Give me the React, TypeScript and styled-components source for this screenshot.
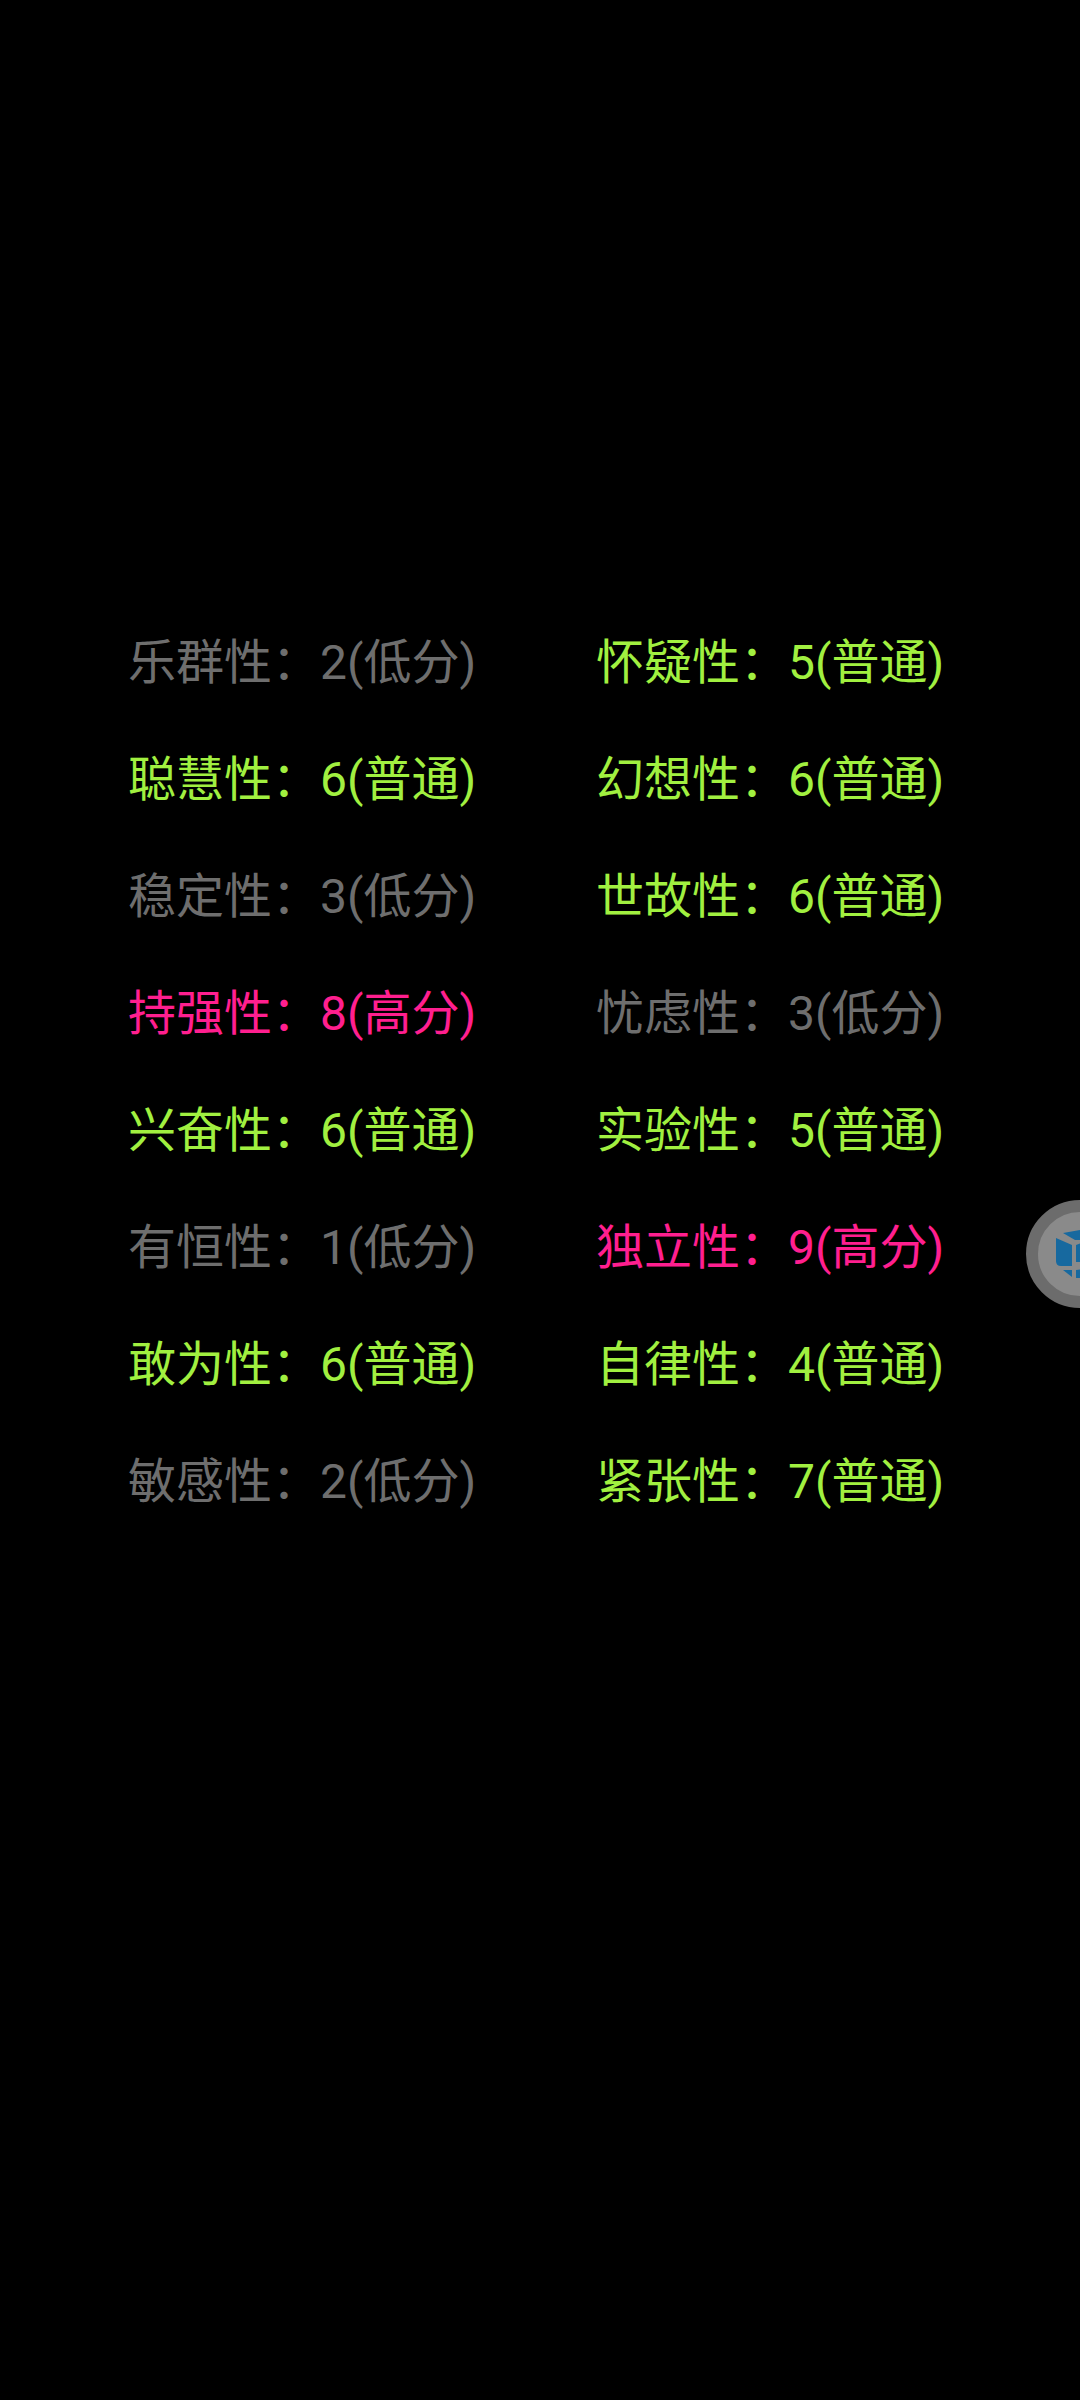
import React from 'react'
import styled, { createGlobalStyle } from 'styled-components'

const GlobalStyle = createGlobalStyle`
  html, body {
    margin: 0;
    background: #000;
  }
`

const Screen = styled.div`
  position: relative;
  width: 1080px;
  height: 2400px;
  overflow: hidden;
  background: #000;
  font-family: Roboto, "Noto Sans CJK SC", sans-serif;
`

const TraitGrid = styled.div`
  display: grid;
  grid-template-columns: 468px 350px;
  grid-auto-rows: 117px;
  padding: 604px 0 0 128px;
`

const levelColors = {
  low: '#6e6e6e',
  normal: '#a1f040',
  high: '#ff1f8f',
}

type Level = keyof typeof levelColors

const Trait = styled.div<{ $level: Level }>`
  font-size: 48px;
  line-height: 117px;
  white-space: nowrap;
  color: ${(p) => levelColors[p.$level]};
`

const FloatBall = styled.div`
  position: absolute;
  left: 1026px;
  top: 1200px;
  width: 108px;
  height: 108px;
  box-sizing: border-box;
  border-radius: 50%;
  border: 12px solid #6c6c6c;
  background: #8a8a8a;
  display: flex;
  align-items: center;
  padding-left: 18px;
`

const levelNames: Record<Level, string> = { low: '低分', normal: '普通', high: '高分' }

const traits: [string, number, Level][] = [
  ['乐群性', 2, 'low'],
  ['怀疑性', 5, 'normal'],
  ['聪慧性', 6, 'normal'],
  ['幻想性', 6, 'normal'],
  ['稳定性', 3, 'low'],
  ['世故性', 6, 'normal'],
  ['持强性', 8, 'high'],
  ['忧虑性', 3, 'low'],
  ['兴奋性', 6, 'normal'],
  ['实验性', 5, 'normal'],
  ['有恒性', 1, 'low'],
  ['独立性', 9, 'high'],
  ['敢为性', 6, 'normal'],
  ['自律性', 4, 'normal'],
  ['敏感性', 2, 'low'],
  ['紧张性', 7, 'normal'],
]

const CubeIcon = () => (
  <svg width="30" height="50" viewBox="0 0 30 50" style={{ flex: 'none' }}>
    <path d="M0 9 L16 16 L16 37 L5 37 Q0 37 0 32 Z" fill="#17699f" />
    <path d="M7 4 L24 1 L30 1 L30 9 L24 11 L19 11 Z" fill="#17699f" />
    <path d="M20 16 L30 12 L30 33 L20 33 Z" fill="#17699f" />
    <path d="M7 41 L16 41 L16 48 Z" fill="#17699f" />
    <path d="M20 41 L30 40 L30 49 L20 49 Z" fill="#17699f" />
  </svg>
)

export default function App() {
  return (
    <Screen>
      <GlobalStyle />
      <TraitGrid>
        {traits.map(([name, score, level]) => (
          <Trait key={name} $level={level}>
            {name}：{score}({levelNames[level]})
          </Trait>
        ))}
      </TraitGrid>
      <FloatBall>
        <CubeIcon />
      </FloatBall>
    </Screen>
  )
}
